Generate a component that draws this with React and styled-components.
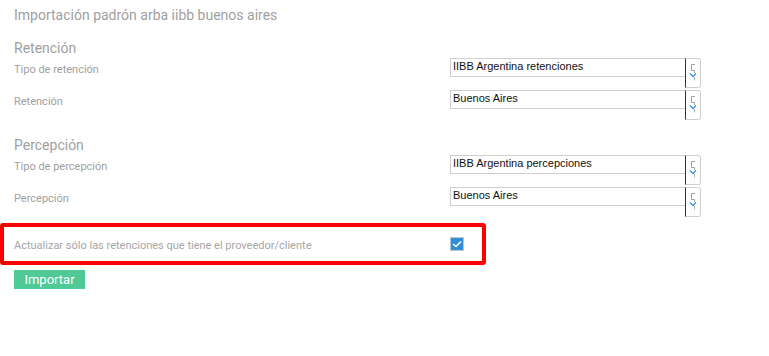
import React from 'react';
import styled, { createGlobalStyle } from 'styled-components';

const GlobalStyle = createGlobalStyle`
  body {
    margin: 0;
    background: #fff;
    font-family: Roboto, "Liberation Sans", Arial, sans-serif;
  }
`;

const Page = styled.div`
  padding-top: 7px;
  width: 769px;
  height: 356px;
  box-sizing: border-box;
`;

const Title = styled.h1`
  margin: 0 0 0 14px;
  font-size: 14px;
  line-height: 17px;
  font-weight: 400;
  color: #a0a0a0;
`;

const SectionTitle = styled.h2`
  margin: ${p => p.$top}px 0 1px 14px;
  font-size: 14px;
  line-height: 17px;
  font-weight: 400;
  color: #a0a0a0;
`;

const Row = styled.div`
  display: grid;
  grid-template-columns: 436px 236px 15px;
  align-items: start;
  height: 32px;
  padding-left: 14px;
`;

const Label = styled.label`
  font-size: 11px;
  line-height: 13px;
  padding-top: 5px;
  color: #a0a0a0;
`;

const Input = styled.div`
  height: 19px;
  border: 1px solid #cfcfcf;
  border-right: none;
  box-sizing: border-box;
  padding: 0 0 0 2px;
  font-family: "Liberation Sans", Arial, sans-serif;
  font-size: 11px;
  line-height: 15px;
  color: #111;
`;

const DropButton = styled.button`
  height: 30px;
  margin: 0 0 0 -1px;
  padding: 0;
  width: 16px;
  background: #fff;
  border: 1px solid #cfcfcf;
  border-left: 1px solid #333;
  border-radius: 0 3px 3px 0;
  display: flex;
  align-items: flex-start;
  justify-content: center;
  padding-top: 3px;
  box-sizing: border-box;
`;

const Highlight = styled.div`
  margin-top: 4px;
  width: 486px;
  height: 42px;
  box-sizing: border-box;
  border: 4px solid #ff0000;
  border-radius: 3px;
  display: grid;
  grid-template-columns: 436px 14px;
  align-items: center;
  padding-left: 10px;
`;

const CheckLabel = styled.span`
  font-size: 11px;
  color: #a6a6a6;
  padding-top: 2px;
`;

const Check = styled.span`
  width: 14px;
  height: 14px;
  box-sizing: border-box;
  background: #2f8ed8;
  border: 1px solid #b9c8d4;
  display: flex;
  align-items: center;
  justify-content: center;
`;

const ImportButton = styled.button`
  margin: 5px 0 0 14px;
  width: 71px;
  height: 19px;
  padding: 0;
  border: none;
  background: #4fc996;
  color: #fff;
  font-family: Roboto, "Liberation Sans", Arial, sans-serif;
  font-size: 13px;
  line-height: 19px;
`;

const DropIcon = () => (
  <svg width="10" height="22" viewBox="0 0 10 22">
    <polyline points="7,2.5 3.5,2.5 3.5,8.5 6.5,8.5 6.5,11" fill="none" stroke="#a0a0a0" strokeWidth="1" />
    <polyline points="2,11.5 5,14.5 8,11.5" fill="none" stroke="#3b8fe0" strokeWidth="1.3" />
    <line x1="6.5" y1="15" x2="6.5" y2="18.5" stroke="#b0b0b0" strokeWidth="1" />
  </svg>
);

const SelectRow = ({ label, value }) => (
  <Row>
    <Label>{label}</Label>
    <Input>{value}</Input>
    <DropButton>
      <DropIcon />
    </DropButton>
  </Row>
);

export default function App() {
  return (
    <Page>
      <GlobalStyle />
      <Title>Importación padrón arba iibb buenos aires</Title>

      <SectionTitle $top={16}>Retención</SectionTitle>
      <SelectRow label="Tipo de retención" value="IIBB Argentina retenciones" />
      <SelectRow label="Retención" value="Buenos Aires" />

      <SectionTitle $top={15}>Percepción</SectionTitle>
      <SelectRow label="Tipo de percepción" value="IIBB Argentina percepciones" />
      <SelectRow label="Percepción" value="Buenos Aires" />

      <Highlight>
        <CheckLabel>Actualizar sólo las retenciones que tiene el proveedor/cliente</CheckLabel>
        <Check>
          <svg width="10" height="8" viewBox="0 0 10 8">
            <polyline points="1,4 4,6.5 9,1.5" fill="none" stroke="#fff" strokeWidth="1.6" />
          </svg>
        </Check>
      </Highlight>

      <ImportButton>Importar</ImportButton>
    </Page>
  );
}
